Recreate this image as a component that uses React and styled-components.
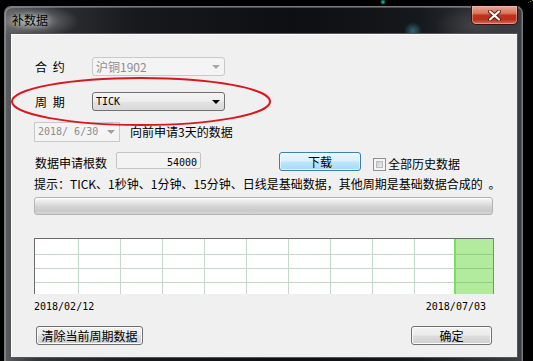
import React from 'react';
import styled, { createGlobalStyle } from 'styled-components';

const Global = createGlobalStyle`
  html, body { margin: 0; padding: 0; background: #000; width: 533px; height: 361px; overflow: hidden; }
  #root { width: 533px; height: 361px; }
  * { box-sizing: border-box; }
`;

const Screen = styled.div`
  position: relative;
  width: 533px;
  height: 361px;
  overflow: hidden;
  padding: 6px 0 0 4px;
  background:
    radial-gradient(circle 3px at 383px 2px, #2fd0b0, transparent),
    linear-gradient(155deg, transparent 0 49.6%, #8a8450 49.8% 50.2%, transparent 50.4%) 500px 0 / 33px 16px no-repeat,
    #000;
  font-family: "Noto Sans CJK SC", "Noto Sans", sans-serif;
  font-size: 12px;
  color: #000;
`;

const Window = styled.div`
  width: 519px;
  height: 380px;
  padding: 0 4px 6px 5px;
  border: 1px solid #77797c;
  border-bottom: none;
  border-radius: 7px 7px 0 0;
  background:
    radial-gradient(ellipse 48px 17px at 26px 14px, rgba(190,190,190,0.85), rgba(120,120,120,0.45) 60%, transparent 100%),
    radial-gradient(circle 9px at 408px 24px, rgba(70,170,190,0.55), transparent),
    radial-gradient(ellipse 40px 20px at 470px 18px, rgba(90,90,95,0.5), transparent),
    linear-gradient(90deg, #5a5c5f 0%, #33363a 6%, #17191c 25%, #0d0f12 55%, #15181c 80%, #3b3e42 100%);
  box-shadow: inset 1px 1px 0 rgba(255,255,255,0.25), inset -1px 0 0 rgba(255,255,255,0.15);
`;

const TitleBar = styled.div`
  height: 26px;
  display: flex;
  align-items: flex-start;
  justify-content: space-between;
`;

const Title = styled.div`
  margin: 6px 0 0 2px;
  line-height: 14px;
  font-size: 12px;
  color: #000;
  text-shadow: 0 0 6px rgba(255,255,255,0.6);
`;

const CloseButton = styled.div`
  margin-top: -1px;
  width: 47px;
  height: 19px;
  border: 1px solid #3d120b;
  border-top: none;
  border-radius: 0 0 5px 5px;
  background: linear-gradient(#e9a897 0%, #d9765f 40%, #c2321b 52%, #b9301c 75%, #d8705a 100%);
  box-shadow: inset 0 0 0 1px rgba(255,200,190,0.45);
  display: flex;
  align-items: center;
  justify-content: center;
`;

const Client = styled.div`
  background: #f0f0f0;
  border: 1px solid #545659;
  box-shadow: inset 1px 1px 0 #ffffff;
  height: 325px;
  padding: 23px 24px 12px 23px;
  display: flex;
  flex-direction: column;
`;

const Row = styled.div`
  display: flex;
  align-items: ${p => p.$align || 'center'};
  height: ${p => p.$h}px;
  margin-top: ${p => p.$mt || 0}px;
`;

const Label = styled.div`
  width: ${p => p.$w}px;
  margin-top: ${p => p.$mt || 0}px;
  padding-left: 1px;
  line-height: 14px;
  white-space: pre;
  word-spacing: 3px;
`;

const Mono = styled.span`
  font-family: "DejaVu Sans Mono", "Liberation Mono", monospace;
  font-size: 10px;
  white-space: pre;
`;

const Combo = styled.div`
  width: ${p => p.$w}px;
  height: ${p => p.$h}px;
  display: flex;
  align-items: center;
  justify-content: space-between;
  padding: 0 4px 0 3px;
  border: 1px solid ${p => (p.$disabled ? '#c9c9c9' : '#707070')};
  border-radius: ${p => (p.$square ? 0 : 3)}px;
  background: ${p =>
    p.$disabled
      ? '#f4f4f4'
      : 'linear-gradient(#f4f4f4 0%, #ececec 50%, #e2e2e2 51%, #d9d9d9 100%)'};
  color: ${p => (p.$disabled ? '#8d8d8d' : '#000')};
  line-height: 14px;
`;

const Arrow = styled.span`
  width: 0;
  height: 0;
  border-left: 4px solid transparent;
  border-right: 4px solid transparent;
  border-top: 4px solid ${p => p.$color};
`;

const Note = styled.div`
  margin-left: 10px;
  line-height: 14px;
`;

const Edit = styled.div`
  width: 85px;
  height: 17px;
  border: 1px solid #c4c4c4;
  border-radius: 2px;
  background: #f3f3f3;
  text-align: right;
  padding-right: 3px;
  line-height: 15px;
`;

const Button = styled.div`
  width: ${p => p.$w}px;
  height: 19px;
  margin-left: ${p => p.$ml || 0}px;
  border: 1px solid ${p => (p.$primary ? '#3c7fb1' : '#707070')};
  border-radius: 3px;
  background: ${p =>
    p.$primary
      ? 'linear-gradient(#eaf6fd 0%, #d9f0fc 48%, #bee6fd 52%, #a7d9f5 100%)'
      : 'linear-gradient(#f2f2f2 0%, #ebebeb 48%, #dddddd 52%, #cfcfcf 100%)'};
  box-shadow: inset 0 0 0 1px ${p => (p.$primary ? 'rgba(255,255,255,0.6)' : '#fcfcfc')};
  display: flex;
  align-items: center;
  justify-content: center;
  line-height: 14px;
`;

const Check = styled.div`
  margin: 6px 0 0 12px;
  width: 13px;
  height: 13px;
  border: 1px solid #8e8f8f;
  background: #f4f4f4;
  padding: 2px;
  & > span {
    display: block;
    width: 7px;
    height: 7px;
    border: 1px solid #b8bcc0;
    background: linear-gradient(135deg, #c9cdd1, #eeeeef);
  }
`;

const CheckLabel = styled.div`
  margin: 5px 0 0 2px;
  line-height: 14px;
`;

const Hint = styled.div`
  margin-top: 6px;
  line-height: 14px;
  white-space: pre;
  word-spacing: 3px;
`;

const Progress = styled.div`
  margin-top: 6px;
  width: 459px;
  height: 18px;
  border: 1px solid #b4b4b4;
  border-radius: 3px;
  background: linear-gradient(#fafafa 0%, #e8e8e8 25%, #d3d3d3 55%, #cacaca 80%, #d6d6d6 100%);
  box-shadow: inset 0 1px 0 #fff;
`;

const Chart = styled.div`
  margin-top: 23px;
  width: 460px;
  height: 56px;
  display: grid;
  grid-template-columns: 44px repeat(8, 42px) 39px 39px;
  grid-template-rows: 16px 14px 14px 11px;
  border-top: 1px solid #6c6c6c;
  border-left: 1px solid #6c6c6c;
  border-right: 1px solid #858585;
  background: #fff;
`;

const Cell = styled.div`
  border-right: ${p => (p.$right ? '1px solid #c3d8cb' : 'none')};
  border-bottom: ${p => (p.$bottom ? `1px solid ${p.$green ? '#94cc84' : '#c3d8cb'}` : 'none')};
  background: ${p => (p.$green ? '#b2eb9d' : 'transparent')};
  box-shadow: ${p => (p.$green ? 'inset 2px 0 0 #7ddf62' : 'none')};
`;

const Dates = styled.div`
  margin-top: 6px;
  width: 459px;
  padding-right: 7px;
  height: 14px;
  display: flex;
  justify-content: space-between;
  align-items: center;
  line-height: 14px;
`;

const Footer = styled.div`
  margin-top: 12px;
  width: 459px;
  padding: 0 1px 0 2px;
  display: flex;
  justify-content: space-between;
`;

const Annotation = styled.svg`
  position: absolute;
  left: 0;
  top: 0;
  pointer-events: none;
`;

export default function App() {
  const cells = [];
  for (let r = 0; r < 4; r++) {
    for (let c = 0; c < 11; c++) {
      cells.push(
        <Cell key={`${r}-${c}`} $right={c < 9} $bottom={r < 3} $green={c === 10} />
      );
    }
  }
  return (
    <Screen>
      <Global />
      <Window>
        <TitleBar>
          <Title>补数据</Title>
          <CloseButton>
            <svg width="13" height="11" viewBox="0 0 13 11">
              <path d="M2 1.5 L11 9.5 M11 1.5 L2 9.5" stroke="#5a1a10" strokeWidth="4" strokeLinecap="round" />
              <path d="M2 1.5 L11 9.5 M11 1.5 L2 9.5" stroke="#ffffff" strokeWidth="2.2" strokeLinecap="round" />
            </svg>
          </CloseButton>
        </TitleBar>
        <Client>
          <Row $h={19}>
            <Label $w={58}>合 约</Label>
            <Combo $w={133} $h={19} $disabled>
              <span>沪铜1902</span>
              <Arrow $color="#a8a8a8" />
            </Combo>
          </Row>
          <Row $h={19} $mt={16}>
            <Label $w={58}>周 期</Label>
            <Combo $w={133} $h={19}>
              <Mono>TICK</Mono>
              <Arrow $color="#000" />
            </Combo>
          </Row>
          <Row $h={20} $mt={11}>
            <Combo $w={86} $h={20} $disabled $square>
              <Mono>2018/ 6/30</Mono>
              <Arrow $color="#a0a0a0" />
            </Combo>
            <Note>向前申请3天的数据</Note>
          </Row>
          <Row $h={19} $mt={10} $align="flex-start">
            <Label $w={82} $mt={4}>数据申请根数</Label>
            <Edit>
              <Mono>54000</Mono>
            </Edit>
            <Button $w={82} $ml={78} $primary>下载</Button>
            <Check>
              <span />
            </Check>
            <CheckLabel>全部历史数据</CheckLabel>
          </Row>
          <Hint>提示：TICK、1秒钟、1分钟、15分钟、日线是基础数据，其他周期是基础数据合成的 。</Hint>
          <Progress />
          <Chart>{cells}</Chart>
          <Dates>
            <Mono>2018/02/12</Mono>
            <Mono>2018/07/03</Mono>
          </Dates>
          <Footer>
            <Button $w={107}>清除当前周期数据</Button>
            <Button $w={81}>确定</Button>
          </Footer>
        </Client>
      </Window>
      <Annotation width="533" height="361" viewBox="0 0 533 361">
        <ellipse cx="141" cy="101.5" rx="129" ry="23.5" fill="none" stroke="#d8181f" strokeWidth="2" />
      </Annotation>
    </Screen>
  );
}
